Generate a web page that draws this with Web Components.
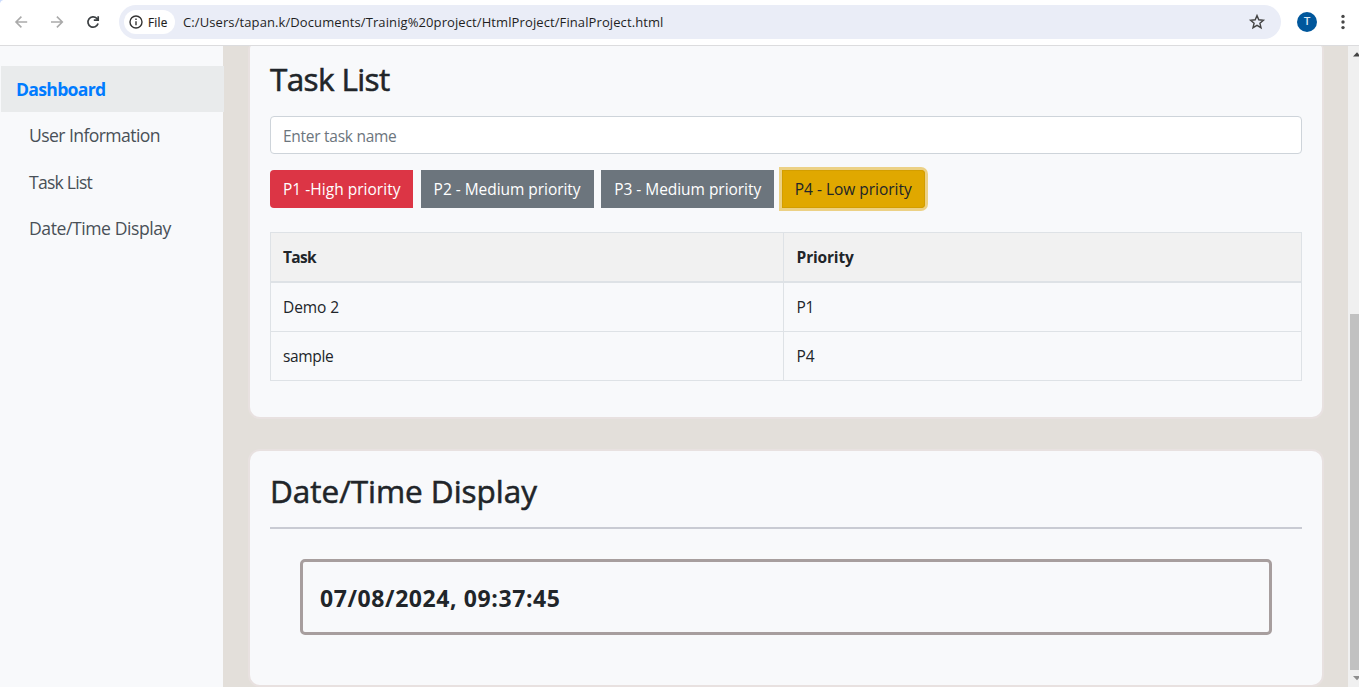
<!DOCTYPE html>
<html lang="en">
<head>
<meta charset="utf-8">
<title>Task dashboard</title>
<style>
html,body{margin:0;height:100%;overflow:hidden}
body{font-family:"Open Sans","Noto Sans",sans-serif;font-size:15.5px;color:#212529;background:#e3dfda}
</style>
</head>
<body>
<app-window></app-window>
<script>
class Base extends HTMLElement{
  connectedCallback(){
    if(this.shadowRoot)return;
    this.attachShadow({mode:'open'}).innerHTML=this.view();
  }
}
/* Text that is tracked to occupy a given advance width. */
class FitText extends HTMLElement{
  connectedCallback(){
    if(this.shadowRoot)return;
    this.attachShadow({mode:'open'}).innerHTML='<style>:host{display:inline-block;white-space:nowrap}</style><slot></slot>';
    const w=+this.getAttribute('w');
    const n=this.textContent.length;
    this.style.letterSpacing=((w-this.getBoundingClientRect().width)/n)+'px';
  }
}
class BrowserBar extends Base{
  view(){return `<style>
:host{display:flex;align-items:center;height:45px;box-sizing:border-box;padding:0 0 1px 12px;background:radial-gradient(circle at 4px 4px,#fff 3.5px,#c9dafc 4.5px) 0 0/3px 3px no-repeat #fff;font-size:13px;color:#1f1f1f}
svg{display:block;flex:none}
.nav{width:107px;display:flex;gap:16px}
.pill{width:1162px;height:34px;border-radius:17px;background:#eaedf7;display:flex;align-items:center;box-sizing:border-box;padding:0 15px 0 5px}
.chip{width:51px;height:24px;border-radius:12px;background:#fff;display:flex;align-items:center;gap:5px;padding-left:5px;box-sizing:border-box;font-size:11.7px;margin-right:8px}
.chip fit-text{line-height:20px;padding-bottom:1px;-webkit-text-stroke:.2px}
.star{margin-left:auto}
.avatar{width:20px;height:20px;border-radius:50%;background:#00579c;color:#dce9f5;font:500 11px/20px Roboto,sans-serif;text-align:center;margin-left:16px}
.dots{margin-left:22px}
</style>
<div class="nav">
<svg width="20" height="20" fill="none" stroke="#aaa" stroke-width="1.6"><path d="M15.2 10H4.2M9.4 4.6 4 10l5.4 5.4"/></svg>
<svg width="20" height="20" fill="none" stroke="#aaa" stroke-width="1.6"><path d="M3 10h11.3M8.9 4.6 14.3 10l-5.4 5.4"/></svg>
<svg width="20" height="20" fill="none" stroke="#3c4043" stroke-width="1.7"><path d="M14.1 11.6A5.2 5.2 0 1 1 12.8 6.3L14 7.5"/><path d="M14.2 4.2V8.2H9.8"/><path d="M14.4 5.6V8.4H11.6z" fill="#3c4043" stroke="none"/></svg>
</div>
<div class="pill">
<div class="chip"><svg width="14" height="14" fill="none" stroke="#333" stroke-width="1.4"><circle cx="7" cy="7" r="6"/><path d="M7 6.2v4M7 3.6v1.4"/></svg><fit-text w="19.5">File</fit-text></div>
<fit-text w="480.5">C:/Users/tapan.k/Documents/Trainig%20project/HtmlProject/FinalProject.html</fit-text>
<svg class="star" width="18" height="18" fill="none" stroke="#444" stroke-width="1.4"><path d="M9 2.6l1.8 4.2 4.6.4-3.5 3 1.1 4.5L9 12.3l-4 2.4 1.1-4.5-3.5-3 4.6-.4z"/></svg>
</div>
<div class="avatar">T</div>
<svg class="dots" width="8" height="18" fill="#474747"><circle cx="4" cy="3.4" r="1.7"/><circle cx="4" cy="9" r="1.7"/><circle cx="4" cy="14.6" r="1.7"/></svg>`}
}
class SideNav extends Base{
  view(){return `<style>
:host{display:block;width:223px;flex:none;background:#f8f9fb;padding-top:20px;box-sizing:border-box;font-size:17.6px;color:#495057}
a{display:block;height:46.5px;line-height:46.5px;padding-left:29px}
a.on{height:46px;line-height:46px;margin:0 -1px 0 1px;padding-left:15px;background:#e9ebec;color:#007bff;font-weight:700}
</style>
<a class="on"><fit-text w="89.5">Dashboard</fit-text></a>
<a><fit-text w="131">User Information</fit-text></a>
<a><fit-text w="63">Task List</fit-text></a>
<a><fit-text w="142">Date/Time Display</fit-text></a>`}
}
class PanelCard extends Base{
  view(){return `<style>
:host{display:block;box-sizing:border-box;width:1076px;border:2px solid #e8e1e0;border-radius:12px;background:#f8f9fb;padding:20px}
:host([scrolled]){border-top:0;border-radius:3px 3px 12px 12px}
</style><slot></slot>`}
}
class PanelTitle extends Base{
  view(){return `<style>:host{display:block;font-size:31.5px;font-weight:500;line-height:38px;height:40px;-webkit-text-stroke:.55px #212529}</style><slot></slot>`}
}
class TaskInput extends Base{
  view(){return `<style>
:host{display:block;height:38px;box-sizing:border-box;border:1px solid #ced4da;border-radius:4px;background:#fff;padding-left:12px;line-height:38px;color:#6c757d}
</style><slot></slot>`}
}
class PriorityButton extends Base{
  view(){return `<style>
:host{display:block;height:38px;line-height:38px;box-sizing:border-box;width:173px;padding-left:13px;background:#6c757d;color:#fff}
:host([kind=high]){width:143px;background:#dc3545;border-radius:4px 0 0 4px}
:host([kind=low]){width:143.5px;background:#e0a800;color:#212529;border-radius:0 4px 4px 0;box-shadow:inset 0 0 0 1px #d39e00,0 0 0 3px #ecd185}
</style><slot></slot>`}
}
class ButtonRow extends Base{
  view(){return `<style>:host{display:flex;gap:7.6px}</style><slot></slot>`}
}
class TaskTable extends Base{
  view(){return `<style>
:host{display:block}
.t{display:grid;grid-template-columns:513px 518px;border:1px solid #dee2e6;border-width:1px 0 0 1px}
.t>div{border:1px solid #dee2e6;border-width:0 1px 1px 0;padding-left:12px;height:48px;line-height:48px}
.t>div:nth-child(2n){padding-left:12.6px}
.t>.h{background:#f1f1f1;font-weight:700;border-bottom-width:2px;height:48px;line-height:49px}
</style>
<div class="t">
<div class="h"><fit-text w="33">Task</fit-text></div><div class="h"><fit-text w="57">Priority</fit-text></div>
<div><fit-text w="56">Demo 2</fit-text></div><div><fit-text w="17.5">P1</fit-text></div>
<div><fit-text w="50.5">sample</fit-text></div><div><fit-text w="18">P4</fit-text></div>
</div>`}
}
class ClockBox extends Base{
  view(){return `<style>
:host{display:block;box-sizing:border-box;height:76px;border:3px solid #a79e9e;border-radius:5px;padding-left:17px;font-size:23px;font-weight:700;line-height:73px}
</style><slot></slot>`}
}
class ScrollBar extends Base{
  view(){return `<style>
:host{display:flex;flex-direction:column;width:11px;background:#f0f0f0;overflow:hidden}
.thumb{margin:257px 0 0 2px;height:356px;background:#c1c1c1;flex:none}
svg{display:block;margin-left:5px;flex:none}
.up{margin-top:6px}
.down{margin-top:6px}
</style>
<svg class="up" width="8" height="5"><path d="M0 4.5 4 .3 8 4.5z" fill="#444"/></svg>
<div class="thumb"></div>
<svg class="down" width="8" height="5"><path d="M0 0 4 4.2 8 0z" fill="#8f8f8f"/></svg>`}
}
class AppWindow extends Base{
  view(){return `<style>
:host{display:flex;flex-direction:column;height:687px;width:1359px;overflow:hidden}
.page{display:flex;height:642px;box-sizing:border-box;border-top:1px solid #dcdcde}
main{flex:none;width:1125px;box-sizing:border-box;padding-left:25px}
panel-card+panel-card{margin-top:30px}
.one{height:373px;padding-top:14px}
.two{height:238px;padding-top:21px}
task-input{margin-top:16px}
button-row{margin-top:16px}
task-table{margin-top:24px}
hr{border:0;height:2px;background:#c9cbd3;margin:15px 0 30px}
clock-box{margin:0 30px}
</style>
<browser-bar></browser-bar>
<div class="page">
<side-nav></side-nav>
<main>
<panel-card scrolled class="one">
<panel-title><fit-text w="119.5">Task List</fit-text></panel-title>
<task-input><fit-text w="113.5">Enter task name</fit-text></task-input>
<button-row>
<priority-button kind="high"><fit-text w="117.5">P1 -High priority</fit-text></priority-button>
<priority-button><fit-text w="147">P2 - Medium priority</fit-text></priority-button>
<priority-button><fit-text w="147">P3 - Medium priority</fit-text></priority-button>
<priority-button kind="low"><fit-text w="117">P4 - Low priority</fit-text></priority-button>
</button-row>
<task-table></task-table>
</panel-card>
<panel-card class="two">
<panel-title><fit-text w="267">Date/Time Display</fit-text></panel-title>
<hr>
<clock-box><fit-text w="240.5">07/08/2024, 09:37:45</fit-text></clock-box>
</panel-card>
</main>
<scroll-bar></scroll-bar>
</div>`}
}
customElements.define('panel-card',PanelCard);
customElements.define('panel-title',PanelTitle);
customElements.define('task-input',TaskInput);
customElements.define('priority-button',PriorityButton);
customElements.define('button-row',ButtonRow);
customElements.define('task-table',TaskTable);
customElements.define('clock-box',ClockBox);
customElements.define('scroll-bar',ScrollBar);
customElements.define('side-nav',SideNav);
customElements.define('browser-bar',BrowserBar);
customElements.define('app-window',AppWindow);
customElements.define('fit-text',FitText);
</script>
</body>
</html>
